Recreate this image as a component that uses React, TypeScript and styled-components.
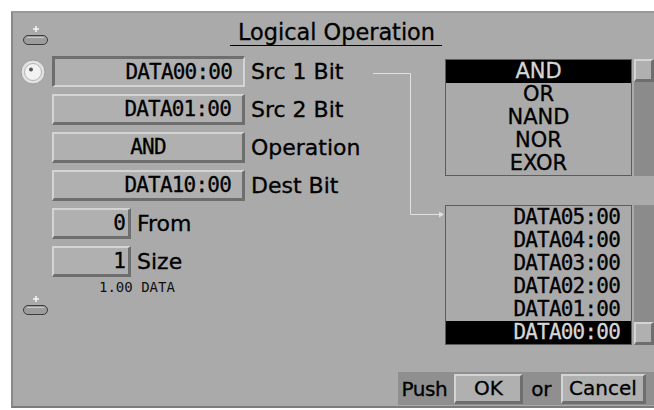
import React from 'react';
import styled, { createGlobalStyle, css } from 'styled-components';

const sans = `"DejaVu Sans", "Noto Sans", sans-serif`;
const mono = `"DejaVu Sans Mono", "Liberation Mono", monospace`;

const color = {
	page: '#ffffff',
	panel: '#aaaaaa',
	face: '#b0b0b0',
	light: '#d4d4d4',
	shadow: '#6e6e6e',
	band: '#8f8f8f',
	track: '#8b8b8b',
	frame: '#5c5c5c',
	selText: '#d6d6d6',
	wire: '#e0e0e0',
};

const raised = css`
	border-style: solid;
	border-width: 2px 3px 3px 2px;
	border-color: ${color.light} ${color.shadow} ${color.shadow} ${color.light};
`;

const sunken = css`
	border-style: solid;
	border-width: 3px 2px 2px 3px;
	border-color: ${color.shadow} ${color.light} ${color.light} ${color.shadow};
`;

// the old X toolkit fonts are a bit heavier than DejaVu regular
const heavy = css`
	-webkit-text-stroke: 0.3px currentColor;
`;

const GlobalStyle = createGlobalStyle`
	html, body {
		margin: 0;
		background: ${color.page};
		overflow: hidden;
	}
	body {
		padding: 11px 0 0 11px;
		font-family: ${sans};
	}
`;

const Panel = styled.div`
	position: relative;
	display: flex;
	width: 645px;
	height: 397px;
	box-sizing: border-box;
	background: ${color.panel};
	border-style: solid;
	border-width: 2px;
	border-color: #9a9a9a #8d8d8d #7c7c7c #888888;
`;

const Gutter = styled.div`
	display: flex;
	flex-direction: column;
	width: 41px;
	padding-top: 12px;
`;

const PillSlot = styled.div<{ $gap?: number }>`
	padding-left: 9px;
	margin-top: ${(p) => p.$gap ?? 0}px;
	height: 21px;
`;

const RadioSlot = styled.div`
	padding-left: 7px;
	margin-top: 13px;
	height: 26px;
`;

const Content = styled.div`
	display: flex;
	flex-direction: column;
	flex: 1;
`;

const Title = styled.div`
	${heavy};
	align-self: flex-start;
	margin: 6px 0 0 178px;
	padding: 0 7px 0 8px;
	font-size: 22.4px;
	line-height: 26px;
	border-bottom: 1px solid #000;
	color: #000;
`;

const Body = styled.div`
	display: flex;
	height: 295px;
`;

const Form = styled.div`
	display: flex;
	flex-direction: column;
	gap: 7px;
	width: 393px;
	padding-top: 10px;
`;

const Row = styled.div`
	display: flex;
	align-items: center;
	gap: 6px;
	height: 31px;
`;

const Field = styled.div<{ $width: number; $pressed?: boolean; $align?: string; $pad?: number }>`
	${(p) => (p.$pressed ? sunken : raised)};
	${heavy};
	display: flex;
	align-items: center;
	justify-content: ${(p) => p.$align ?? 'flex-end'};
	width: ${(p) => p.$width}px;
	height: 31px;
	box-sizing: border-box;
	padding-right: ${(p) => p.$pad ?? 0}px;
	background: ${color.face};
	font-family: ${mono};
	font-size: 21px;
	letter-spacing: -0.8px;
	color: #000;
`;

const Label = styled.span`
	${heavy};
	font-size: 22px;
	line-height: 1;
	color: #000;
	white-space: nowrap;
`;

const Hint = styled.div`
	margin: 3px 0 0 47px;
	font-family: ${mono};
	font-size: 14px;
	line-height: 14px;
	color: #111;
`;

const Lists = styled.div`
	display: flex;
	flex-direction: column;
	gap: 29px;
	padding-top: 13px;
`;

const ListRow = styled.div`
	display: flex;
	gap: 2px;
`;

const ListBox = styled.div`
	display: flex;
	flex-direction: column;
	width: 187px;
	box-sizing: border-box;
	border: 1px solid ${color.frame};
`;

const ListItem = styled.div<{ $selected?: boolean; $mono?: boolean }>`
	${heavy};
	height: 23px;
	line-height: 23px;
	padding-right: ${(p) => (p.$mono ? 11 : 0)}px;
	text-align: ${(p) => (p.$mono ? 'right' : 'center')};
	font-family: ${(p) => (p.$mono ? mono : sans)};
	font-size: 21px;
	letter-spacing: ${(p) => (p.$mono ? '-0.8px' : '0')};
	background: ${(p) => (p.$selected ? '#000' : 'transparent')};
	color: ${(p) => (p.$selected ? color.selText : '#000')};
`;

const ScrollTrack = styled.div<{ $end?: boolean }>`
	display: flex;
	flex-direction: column;
	justify-content: ${(p) => (p.$end ? 'flex-end' : 'flex-start')};
	width: 20px;
	background: ${color.track};
`;

const Thumb = styled.div`
	${raised};
	height: 23px;
	box-sizing: border-box;
	background: ${color.face};
`;

const Footer = styled.div`
	display: flex;
	justify-content: flex-end;
	margin-top: 31px;
`;

const Bar = styled.div`
	${heavy};
	display: flex;
	align-items: center;
	height: 33px;
	padding: 0 8px 0 3px;
	background: ${color.band};
	font-size: 20px;
	color: #000;
`;

const BarText = styled.span<{ $gap: number }>`
	margin-right: ${(p) => p.$gap}px;
	letter-spacing: -0.4px;
`;

const Button = styled.div<{ $width: number; $gap?: number }>`
	${raised};
	display: flex;
	align-items: center;
	justify-content: center;
	width: ${(p) => p.$width}px;
	height: 30px;
	box-sizing: border-box;
	margin-right: ${(p) => p.$gap ?? 0}px;
	background: ${color.face};
`;

const Wires = styled.svg`
	position: absolute;
	left: 0;
	top: 0;
	pointer-events: none;
`;

const Pill = () => (
	<svg width="27" height="21" viewBox="0 0 27 21">
		<path d="M14 1v6M11 4h6" stroke="#f4f4f4" strokeWidth="1.6" />
		<rect x="1.5" y="10.5" width="24" height="9" rx="4.5" fill="#9c9c9c" stroke="#3c3c3c" />
		<path d="M5 12.5h17" stroke="#c8c8c8" strokeWidth="1" />
	</svg>
);

const Radio = () => (
	<svg width="26" height="26" viewBox="0 0 26 26">
		<circle cx="13" cy="13" r="12" fill="#e2e2e2" stroke="#9a9a9a" />
		<circle cx="13" cy="13" r="8.5" fill="#f2f2f2" stroke="#b4b4b4" />
		<circle cx="11" cy="10.5" r="2" fill="#555" />
	</svg>
);

const rows = [
	{ value: 'DATA00:00', label: 'Src 1 Bit', pressed: true },
	{ value: 'DATA01:00', label: 'Src 2 Bit' },
	{ value: 'AND', label: 'Operation', center: true },
	{ value: 'DATA10:00', label: 'Dest Bit' },
];

const operations = ['AND', 'OR', 'NAND', 'NOR', 'EXOR'];
const bits = ['DATA05:00', 'DATA04:00', 'DATA03:00', 'DATA02:00', 'DATA01:00', 'DATA00:00'];

export default function App() {
	return (
		<>
			<GlobalStyle />
			<Panel>
				<Gutter>
					<PillSlot>
						<Pill />
					</PillSlot>
					<RadioSlot>
						<Radio />
					</RadioSlot>
					<PillSlot $gap={210}>
						<Pill />
					</PillSlot>
				</Gutter>
				<Content>
					<Title>Logical Operation</Title>
					<Body>
						<Form>
							{rows.map((r) => (
								<Row key={r.label}>
									<Field
										$width={193}
										$pressed={r.pressed}
										$align={r.center ? 'center' : 'flex-end'}
										$pad={r.center ? 0 : 11}
									>
										{r.value}
									</Field>
									<Label>{r.label}</Label>
								</Row>
							))}
							<Row>
								<Field $width={79} $pad={3}>0</Field>
								<Label>From</Label>
							</Row>
							<div>
								<Row>
									<Field $width={79} $pad={3}>1</Field>
									<Label>Size</Label>
								</Row>
								<Hint>1.00 DATA</Hint>
							</div>
						</Form>
						<Lists>
							<ListRow>
								<ListBox>
									{operations.map((op, i) => (
										<ListItem key={op} $selected={i === 0}>
											{op}
										</ListItem>
									))}
								</ListBox>
								<ScrollTrack>
									<Thumb />
								</ScrollTrack>
							</ListRow>
							<ListRow>
								<ListBox>
									{bits.map((b, i) => (
										<ListItem key={b} $mono $selected={i === bits.length - 1}>
											{b}
										</ListItem>
									))}
								</ListBox>
								<ScrollTrack $end>
									<Thumb />
								</ScrollTrack>
							</ListRow>
						</Lists>
					</Body>
					<Footer>
						<Bar>
							<BarText $gap={7}>Push</BarText>
							<Button $width={69} $gap={8}>OK</Button>
							<BarText $gap={10}>or</BarText>
							<Button $width={85}>Cancel</Button>
						</Bar>
					</Footer>
				</Content>
				<Wires width="640" height="390">
					<path d="M360 60.5H397.5V201.5H428" fill="none" stroke={color.wire} strokeWidth="1" />
					<path d="M426 198.5L431 201.5L426 204.5Z" fill={color.wire} />
				</Wires>
			</Panel>
		</>
	);
}
